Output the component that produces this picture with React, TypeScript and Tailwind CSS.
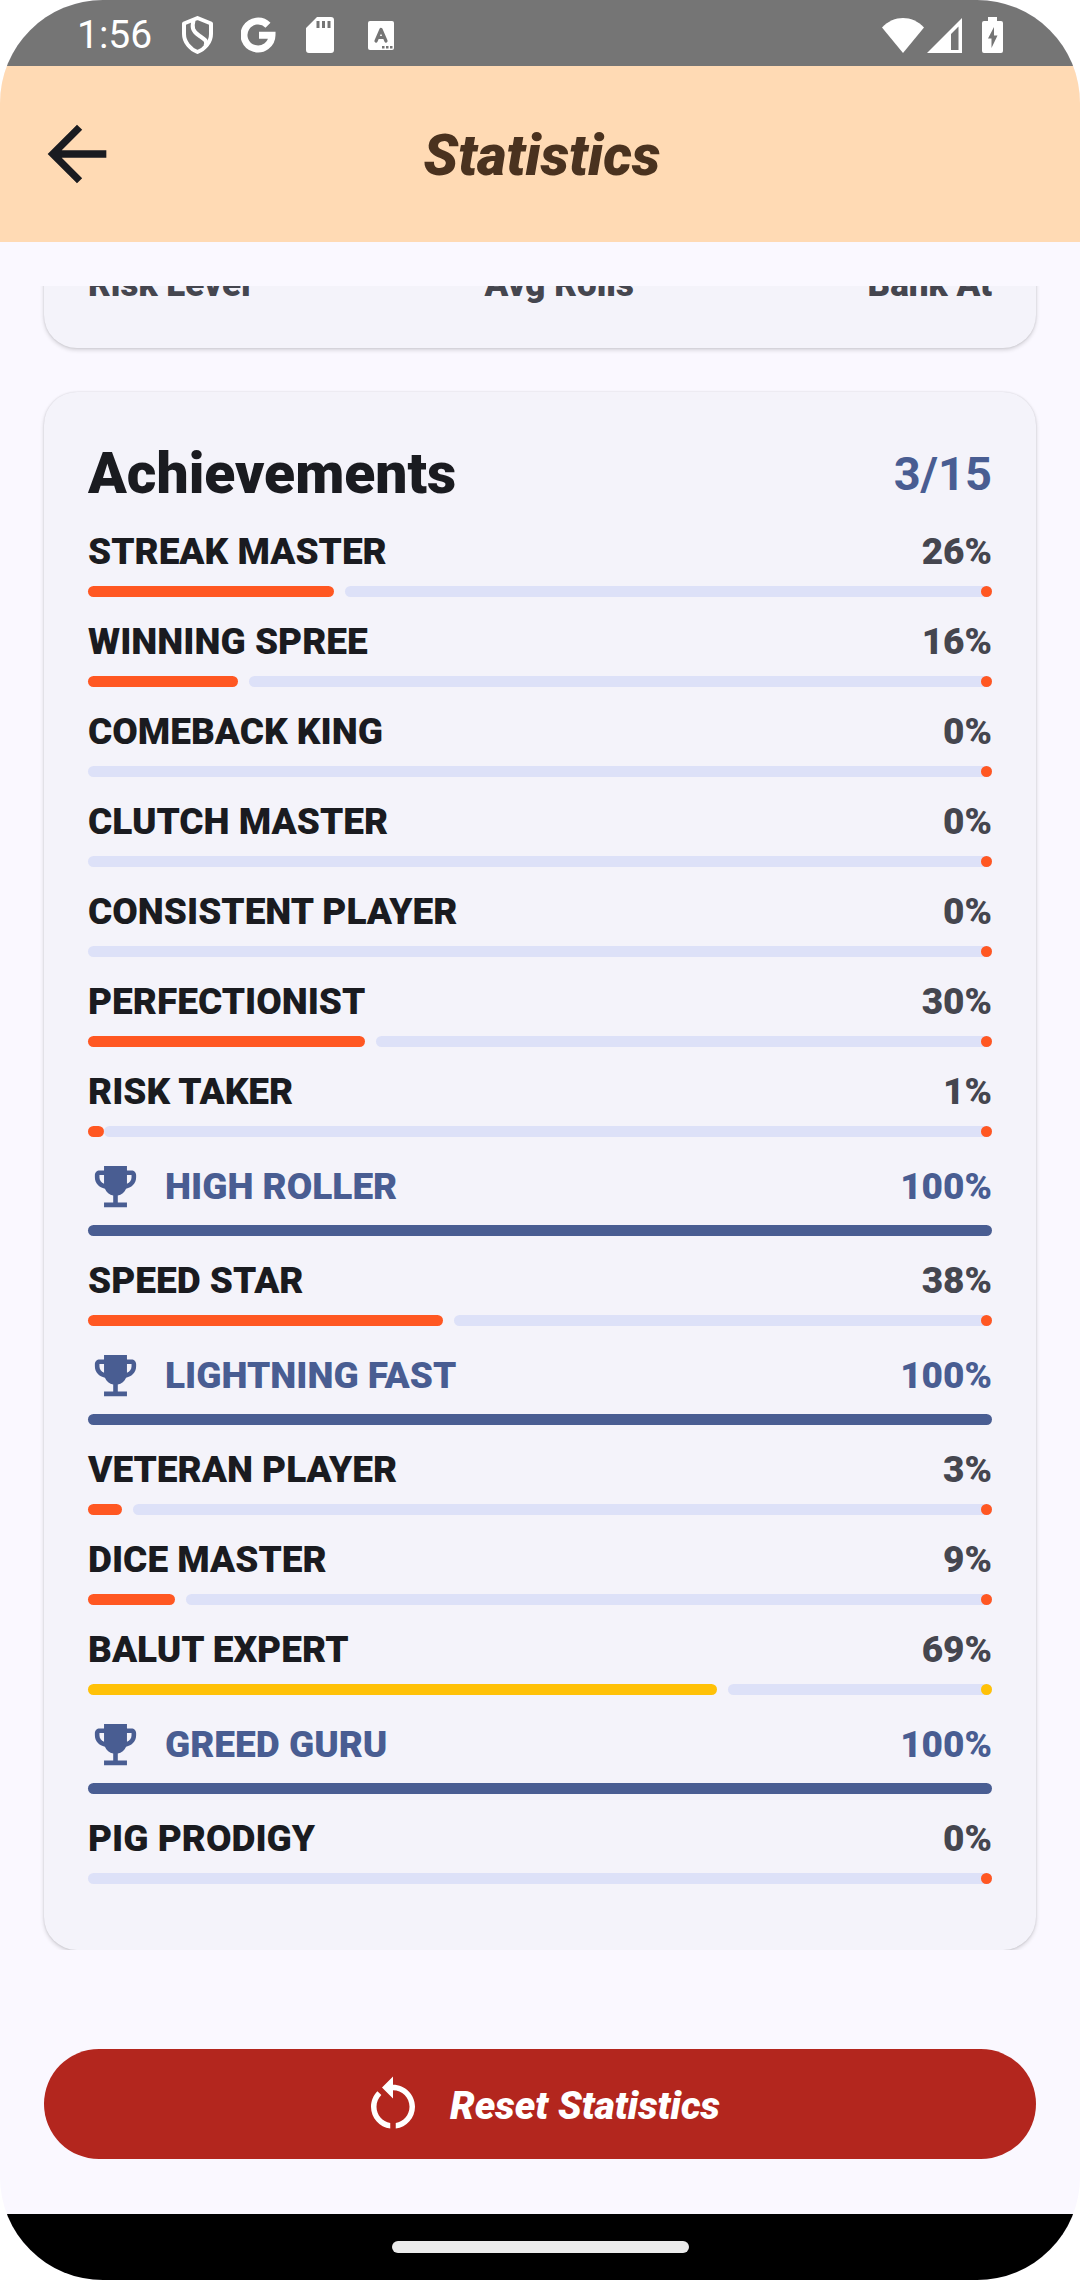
type Achievement = { name: string; percent: number; fill: number };

const achievements: Achievement[] = [
  { name: 'STREAK MASTER', percent: 26, fill: 27.2 },
  { name: 'WINNING SPREE', percent: 16, fill: 16.6 },
  { name: 'COMEBACK KING', percent: 0, fill: 0 },
  { name: 'CLUTCH MASTER', percent: 0, fill: 0 },
  { name: 'CONSISTENT PLAYER', percent: 0, fill: 0 },
  { name: 'PERFECTIONIST', percent: 30, fill: 30.6 },
  { name: 'RISK TAKER', percent: 1, fill: 1.8 },
  { name: 'HIGH ROLLER', percent: 100, fill: 100 },
  { name: 'SPEED STAR', percent: 38, fill: 39.3 },
  { name: 'LIGHTNING FAST', percent: 100, fill: 100 },
  { name: 'VETERAN PLAYER', percent: 3, fill: 3.8 },
  { name: 'DICE MASTER', percent: 9, fill: 9.6 },
  { name: 'BALUT EXPERT', percent: 69, fill: 69.6 },
  { name: 'GREED GURU', percent: 100, fill: 100 },
  { name: 'PIG PRODIGY', percent: 0, fill: 0 },
];

function StatusBar() {
  return (
    <div className="flex h-[66px] shrink-0 items-center justify-between bg-[#757575] pt-1 pr-[77px] pl-[77px] text-white">
      <div className="flex items-center">
        <span className="font-['Roboto'] text-[39px] leading-[48px]">1:56</span>
        <svg className="ml-[30px] h-[38px] w-[31px]" viewBox="0 0 31 38" fill="none" stroke="currentColor" strokeWidth="4" strokeLinejoin="round" aria-hidden="true">
          <path d="M15.500 2 L29 7.500 V18 C29 26 23 33 15.500 36 C8 33 2 26 2 18 V7.500 Z" />
          <path d="M11.500 4.500 C9.500 12 11 15.500 17 19.500 C23 23.500 25.500 24.500 23.500 30" />
        </svg>
        <svg className="ml-[28px] h-[36px] w-[35px]" viewBox="0 0 35 36" fill="none" stroke="currentColor" strokeWidth="7" aria-hidden="true">
          <path d="M27 8.200 A14 14 0 1 0 31 18.200 H18" />
        </svg>
        <svg className="ml-[30px] h-[36px] w-[28px]" viewBox="0 0 28 36" fill="currentColor" aria-hidden="true">
          <path fillRule="evenodd" d="M11 0H25a3 3 0 0 1 3 3V33a3 3 0 0 1-3 3H3a3 3 0 0 1-3-3V11ZM10.500 4v7h3V4Zm5.500 0v7h3V4Zm5.500 0v7h3V4Z" />
        </svg>
        <svg className="ml-[34px] h-[29px] w-[26px]" viewBox="0 0 26 29" aria-hidden="true">
          <rect width="26" height="29" rx="2" fill="currentColor" />
          <path d="M8 20 L13 8.500 L18 20 M9.500 16.500 H16.500" fill="none" stroke="#757575" strokeWidth="3.200" strokeLinecap="round" strokeLinejoin="round" />
          <path d="M14 25h2.500v2.500H14zM18 25h2.500v2.500H18zM22 25h2.500v2.500H22z" fill="#757575" />
        </svg>
      </div>
      <div className="flex items-center">
        <svg className="h-[35px] w-[42px]" viewBox="0 0 42 35" fill="currentColor" aria-hidden="true">
          <path d="M21 35 L0 9.500 C12 -3.100 30 -3.100 42 9.500 Z" />
        </svg>
        <svg className="ml-[3px] h-[35px] w-[35px]" viewBox="0 0 35 35" fill="currentColor" aria-hidden="true">
          <path fillRule="evenodd" d="M35 0V35H0ZM24 16V32H31.500V8.500Z" />
        </svg>
        <svg className="ml-5 h-[36px] w-[21px]" viewBox="0 0 21 36" fill="currentColor" aria-hidden="true">
          <path fillRule="evenodd" d="M6 0H15V4H19a2 2 0 0 1 2 2V34a2 2 0 0 1-2 2H2a2 2 0 0 1-2-2V6a2 2 0 0 1 2-2H6ZM12 10 6 21.500H9.500V31L15.500 18.500H12Z" />
        </svg>
      </div>
    </div>
  );
}

function Trophy() {
  return (
    <svg className="size-[55px]" viewBox="0 0 24 24" fill="currentColor" aria-hidden="true">
      <path d="M19 5h-2V3H7v2H5c-1.100 0-2 .9-2 2v1c0 2.550 1.920 4.630 4.390 4.940.63 1.500 1.980 2.630 3.610 2.960V19H7v2h10v-2h-4v-3.100c1.630-.33 2.980-1.460 3.610-2.960C19.080 12.630 21 10.550 21 8V7c0-1.100-.9-2-2-2zM5 8V7h2v3.820C5.840 10.400 5 9.300 5 8zm14 0c0 1.300-.84 2.400-2 2.820V7h2v1z" />
    </svg>
  );
}

function ProgressBar({ name, percent, fill }: Achievement) {
  const done = percent === 100;
  const color = done ? 'bg-[#495d92]' : percent >= 50 ? 'bg-[#ffc107]' : 'bg-[#ff5722]';
  return (
    <div role="progressbar" aria-label={name} aria-valuenow={percent} aria-valuemin={0} aria-valuemax={100} className="flex h-[11px]">
      {fill > 0 && <div className={`${color} shrink-0 rounded-full`} style={{ width: `${fill}%` }} />}
      {!done && (
        <div className={`flex flex-1 justify-end rounded-full bg-[#dde1f8] ${fill >= 3 ? 'ml-[11px]' : ''}`}>
          <div className={`${color} size-[11px] rounded-full`} />
        </div>
      )}
    </div>
  );
}

function AchievementRow(item: Achievement) {
  const done = item.percent === 100;
  return (
    <li className="flex flex-col gap-[11px]">
      <div className={`flex items-center justify-between text-[37px] leading-[46px] font-black ${done ? 'text-[#495d92]' : 'text-[#1a1b20]'}`}>
        <span className="flex items-center gap-[22px]">
          {done && <Trophy />}
          {item.name}
        </span>
        <span className={done ? '' : 'text-[#45464f]'}>{item.percent}%</span>
      </div>
      <ProgressBar {...item} />
    </li>
  );
}

const card = 'shrink-0 rounded-[33px] bg-[#f4f3fa] p-11 shadow-[0_2px_4px_rgba(0,0,0,0.16),0_0_2px_rgba(0,0,0,0.12)]';

export default function App() {
  return (
    <div className="min-h-screen bg-white font-['Roboto',sans-serif]">
      <div className="flex h-screen flex-col overflow-hidden rounded-[103px] bg-[#faf8ff]">
        <StatusBar />
        <header className="grid h-[176px] shrink-0 grid-cols-[88px_1fr_88px] items-center bg-[#ffdab4] px-[33px]">
          <button type="button" aria-label="Back" className="text-[#1a1b20]">
            <svg className="size-[88px]" viewBox="0 0 24 24" fill="currentColor" aria-hidden="true">
              <path d="M20 11H7.830l5.590-5.590L12 4l-8 8 8 8 1.410-1.410L7.830 13H20v-2z" />
            </svg>
          </button>
          <h1 className="pt-1 pl-1 text-center text-[57px] leading-[72px] font-black text-[#4a321f] italic">Statistics</h1>
        </header>

        <main className="mt-11 flex min-h-0 flex-1 flex-col justify-end gap-11 overflow-hidden px-11">
          <section className={card}>
            <div className="flex justify-between text-[35px] leading-[38px] font-black text-[#45464f]">
              <span>Risk Level</span>
              <span>Avg Rolls</span>
              <span>Bank At</span>
            </div>
          </section>

          <section className={card}>
            <div className="flex items-center justify-between">
              <h2 className="text-[57px] leading-[76px] font-black text-[#1a1b20]">Achievements</h2>
              <span className="text-[47px] leading-[72px] font-bold text-[#495d92]">3/15</span>
            </div>
            <ul className="mt-[17px] mb-[22px] flex flex-col gap-[22px]">
              {achievements.map((item) => (
                <AchievementRow key={item.name} {...item} />
              ))}
            </ul>
          </section>
        </main>

        <footer className="shrink-0 px-11 pt-[99px] pb-[55px]">
          <button type="button" className="flex h-[110px] w-full items-center justify-center gap-6 rounded-full bg-[#b3261e] text-[39px] leading-[46px] font-black text-white italic">
            <svg className="size-[66px]" viewBox="0 0 24 24" fill="currentColor" aria-hidden="true">
              <path d="M12 5V2L8 6l4 4V7c3.310 0 6 2.690 6 6 0 2.970-2.170 5.430-5 5.910v2.020c3.950-.49 7-3.850 7-7.930 0-4.420-3.580-8-8-8zm-6 8c0-1.650.67-3.150 1.760-4.240L6.340 7.340C4.900 8.790 4 10.790 4 13c0 4.080 3.050 7.440 7 7.930v-2.020c-2.830-.48-5-2.940-5-5.910z" />
            </svg>
            <span className="pt-1">Reset Statistics</span>
          </button>
        </footer>

        <div className="flex h-[66px] shrink-0 items-center justify-center bg-black">
          <div className="h-3 w-[297px] rounded-full bg-[#ebebeb]" />
        </div>
      </div>
    </div>
  );
}
